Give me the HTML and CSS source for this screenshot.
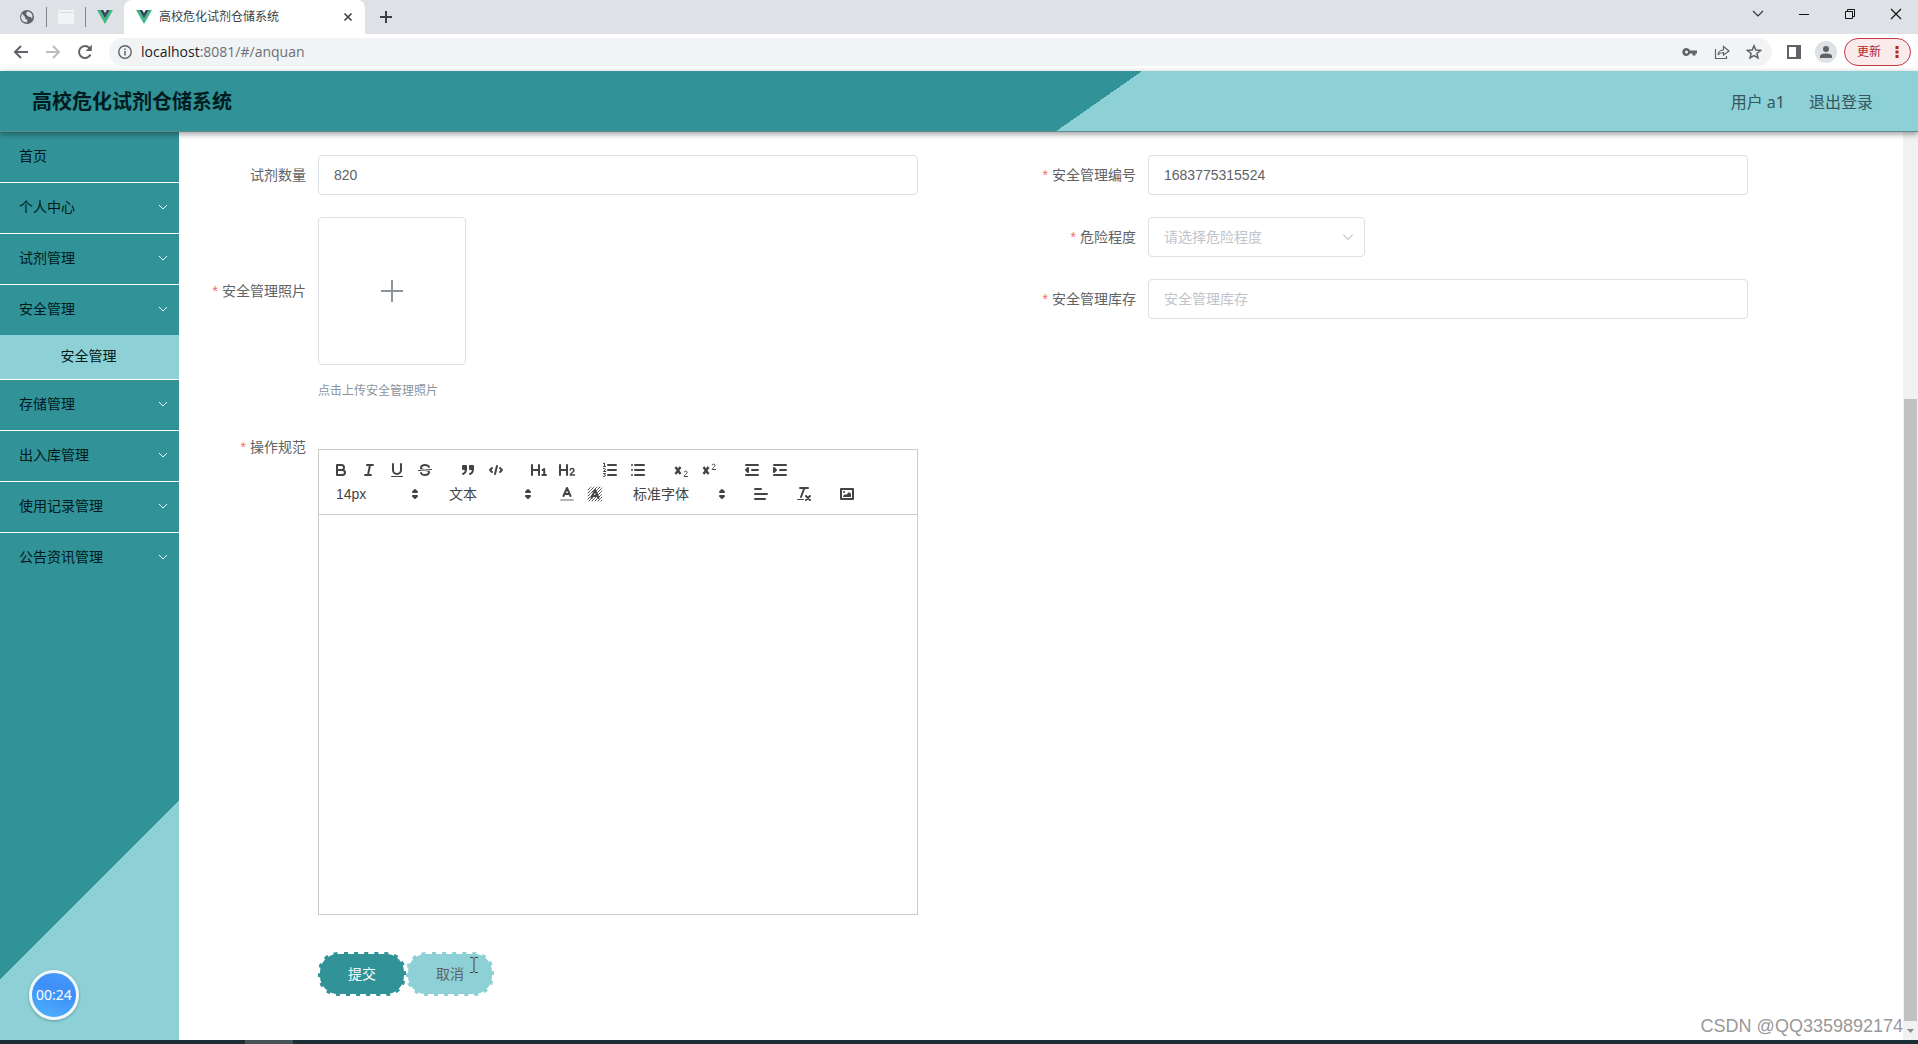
FILE: index.html
```html
<!DOCTYPE html>
<html lang="zh-CN">
<head>
<meta charset="utf-8">
<title>高校危化试剂仓储系统</title>
<link rel="stylesheet" href="styles.css">
</head>
<body>
<svg class="defs" aria-hidden="true">
  <symbol id="vue" viewBox="0 0 16 14"><path d="M0 0H3.2L8 8.3 12.8 0H16L8 14Z" fill="#41b883"/><path d="M3.2 0H6.2L8 3.1 9.8 0H12.8L8 8.3Z" fill="#35495e"/></symbol>
  <symbol id="chev" viewBox="0 0 12 12"><path d="M2 4L6 8 10 4" fill="none" stroke="currentColor"/></symbol>
  <symbol id="picker" viewBox="0 0 18 18"><path class="s f" d="M7 11L9 13 11 11ZM7 7L9 5 11 7Z"/></symbol>
</svg>

<div class="browser">
  <div class="tabs">
    <svg class="globe" width="16" height="16" viewBox="0 0 16 16"><circle cx="8" cy="8" r="7" fill="#5f6368"/><path d="M3 4.500L6 8 6.500 10 8.500 11 8 13.500C4 13.500 2 10.500 2 8ZM8 2.500L7 5 9 7.500 12 8 13 10 13.500 7C13 4 11 2.500 8 2.500Z" fill="#dee1e6"/></svg>
    <span class="tabline"></span>
    <svg class="blank" width="16" height="14" viewBox="0 0 16 14"><path d="M0 0H16V14H0Z" fill="#f3f4f6"/><path d="M1 2.500H15" stroke="#d7dade"/></svg>
    <span class="tabline"></span>
    <svg class="vue" width="16" height="14"><use href="#vue"/></svg>
    <div class="tab">
      <svg width="16" height="14"><use href="#vue"/></svg>
      <span class="tabtitle">高校危化试剂仓储系统</span>
      <button class="ib" aria-label="关闭标签页"><svg width="10" height="10" viewBox="0 0 10 10"><path d="M1.500 1.500L8.500 8.500M8.500 1.500L1.500 8.500" stroke="#3c4043" stroke-width="1.600"/></svg></button>
    </div>
    <button class="ib newtab" aria-label="新标签页"><svg width="14" height="14" viewBox="0 0 14 14"><path d="M7 1V13M1 7H13" stroke="#3c4043" stroke-width="2"/></svg></button>
    <div class="win">
      <button class="ib" aria-label="搜索标签页"><svg width="12" height="12" viewBox="0 0 12 12"><path d="M1 3L6 8 11 3" fill="none" stroke="#333" stroke-width="1.200"/></svg></button>
      <button class="ib" aria-label="最小化"><svg width="12" height="12" viewBox="0 0 12 12"><path d="M1 6.500H11" stroke="#111"/></svg></button>
      <button class="ib" aria-label="还原"><svg width="12" height="12" viewBox="0 0 12 12"><path d="M1.500 3.500H8.500V10.500H1.500ZM3.500 3V1.500H10.500V8.500H9" fill="none" stroke="#111"/></svg></button>
      <button class="ib" aria-label="关闭"><svg width="12" height="12" viewBox="0 0 12 12"><path d="M1 1L11 11M11 1L1 11" stroke="#111" stroke-width="1.200"/></svg></button>
    </div>
  </div>
  <div class="bar">
    <button class="ib" aria-label="后退"><svg width="16" height="16" viewBox="0 0 16 16"><path d="M15 8H2M8 2L2 8 8 14" fill="none" stroke="#5f6368" stroke-width="2"/></svg></button>
    <button class="ib" aria-label="前进"><svg width="16" height="16" viewBox="0 0 16 16"><path d="M1 8H14M8 2L14 8 8 14" fill="none" stroke="#babcbe" stroke-width="2"/></svg></button>
    <button class="ib" aria-label="重新加载"><svg width="16" height="16" viewBox="0 0 16 16"><path d="M13.500 10.500A6 6 0 1 1 12.500 4" fill="none" stroke="#5f6368" stroke-width="2"/><path d="M14.800 0.800V7H8.600Z" fill="#5f6368"/></svg></button>
    <div class="omni">
      <svg width="14" height="14" viewBox="0 0 14 14"><circle cx="7" cy="7" r="6.200" fill="none" stroke="#5f6368" stroke-width="1.400"/><path d="M7 6V10.500M7 3.400V5" stroke="#5f6368" stroke-width="1.500"/></svg>
      <p class="url"><b>localhost</b>:8081/#/anquan</p>
      <svg width="16" height="16" viewBox="0 0 16 16"><path d="M8 6.500H15V9.500H13.500V11.500H10.500V9.500H8A4 4 0 1 1 8 6.500ZM4.500 6.500A1.500 1.500 0 1 0 4.500 9.500 1.500 1.500 0 1 0 4.500 6.500Z" fill="#5f6368" fill-rule="evenodd"/></svg>
      <svg width="16" height="16" viewBox="0 0 16 16"><path d="M1.500 5V14.500H12.500V12M4 11C4.500 7.500 6.500 6 9.500 6V2.500L15 7 9.500 11V8.500C7 8.500 5.500 9 4 11Z" fill="none" stroke="#5f6368" stroke-width="1.200"/></svg>
      <svg width="16" height="16" viewBox="0 0 16 16"><path d="M8 1.800L9.800 6.100 14.500 6.500 10.900 9.500 12 14 8 11.600 4 14 5.100 9.500 1.500 6.500 6.200 6.100Z" fill="none" stroke="#5f6368" stroke-width="1.500"/></svg>
    </div>
    <svg class="panel" width="14" height="14" viewBox="0 0 14 14"><path d="M1 1H13V13H1Z" fill="none" stroke="#5f6368" stroke-width="2"/><path d="M9 0H14V14H9Z" fill="#5f6368"/></svg>
    <svg width="22" height="22" viewBox="0 0 22 22"><circle cx="11" cy="11" r="11" fill="#dee1e6"/><circle cx="11" cy="8" r="3" fill="#5f6368"/><path d="M5 17V15C5 11.500 17 11.500 17 15V17Z" fill="#5f6368"/></svg>
    <button class="update">更新<svg width="4" height="14" viewBox="0 0 4 14"><path d="M0.500 1H3.500V4H0.500ZM0.500 5.500H3.500V8.500H0.500ZM0.500 10H3.500V13H0.500Z" fill="#b3261e"/></svg></button>
  </div>
</div>

<header class="top">
  <h1>高校危化试剂仓储系统</h1>
  <nav><span>用户 a1</span><a href="#logout">退出登录</a></nav>
</header>

<div class="page">
  <nav class="side">
    <a href="#home">首页</a>
    <a href="#center">个人中心<svg width="12" height="12"><use href="#chev"/></svg></a>
    <a href="#reagent">试剂管理<svg width="12" height="12"><use href="#chev"/></svg></a>
    <a class="open" href="#safe">安全管理<svg width="12" height="12"><use href="#chev"/></svg></a>
    <a class="sub" href="#anquan">安全管理</a>
    <a href="#store">存储管理<svg width="12" height="12"><use href="#chev"/></svg></a>
    <a href="#inout">出入库管理<svg width="12" height="12"><use href="#chev"/></svg></a>
    <a href="#log">使用记录管理<svg width="12" height="12"><use href="#chev"/></svg></a>
    <a class="open" href="#news">公告资讯管理<svg width="12" height="12"><use href="#chev"/></svg></a>
    <div class="timer">00:24</div>
  </nav>

  <main>
    <form>
      <div class="cols">
        <div class="col">
          <div class="item"><label for="qty">试剂数量</label><input id="qty" class="wide" value="820"></div>
          <div class="item photo"><label class="req" for="photo">安全管理照片</label>
            <button type="button" id="photo" class="upload" aria-label="上传照片"><svg width="28" height="28" viewBox="0 0 28 28"><path d="M14 3V25M3 14H25" stroke="#8c939d" stroke-width="2"/></svg></button>
          </div>
          <p class="hint">点击上传安全管理照片</p>
        </div>
        <div class="col">
          <div class="item"><label class="req" for="no">安全管理编号</label><input id="no" class="wide" value="1683775315524"></div>
          <div class="item"><label class="req" for="level">危险程度</label>
            <span class="pick"><select id="level"><option>请选择危险程度</option></select><svg width="14" height="14"><use href="#chev"/></svg></span>
          </div>
          <div class="item"><label class="req" for="stock">安全管理库存</label><input id="stock" class="wide" placeholder="安全管理库存"></div>
        </div>
      </div>

      <div class="item rich">
        <label class="req" for="rule">操作规范</label>
        <div class="editor">
          <div class="tools">
            <div class="grp">
              <button type="button" aria-label="粗体"><svg viewBox="0 0 18 18"><path class="s" d="M5 4H9.500A2.500 2.500 0 0 1 9.500 9H5ZM5 9H10.500A2.500 2.500 0 0 1 10.500 14H5Z"/></svg></button>
              <button type="button" aria-label="斜体"><svg viewBox="0 0 18 18"><path class="s" d="M7 4H13M5 14H11M8 14L10 4"/></svg></button>
              <button type="button" aria-label="下划线"><svg viewBox="0 0 18 18"><path class="s" d="M5 3V9A4 4 0 0 0 13 9V3"/><rect class="f" x="3" y="15" width="12" height="1" rx=".5"/></svg></button>
              <button type="button" aria-label="删除线"><svg viewBox="0 0 18 18"><path class="s t" d="M15.500 8.500L2.500 9.500"/><path class="f" d="M9.007,8C6.542,7.791,6,7.519,6,6.500,6,5.792,7.283,5,9,5c1.571,0,2.765.679,2.969,1.309a1,1,0,0,0,1.900-.617C13.356,4.106,11.354,3,9,3,6.200,3,4,4.538,4,6.500a3.200,3.200,0,0,0,.5,1.843ZM8.984,10C11.457,10.208,12,10.479,12,11.500c0,.708-1.283,1.500-3,1.500-1.571,0-2.765-.679-2.969-1.309a1,1,0,1,0-1.900.617C4.644,13.894,6.646,15,9,15c2.800,0,5-1.538,5-3.500a3.200,3.200,0,0,0-.5-1.843Z"/></svg></button>
            </div>
            <div class="grp">
              <button type="button" aria-label="引用"><svg viewBox="0 0 18 18"><path class="s f" d="M4 5H7V8H4ZM11 5H14V8H11Z"/><path class="s" d="M7 8C7 12 4 13 4 13M14 8C14 12 11 13 11 13"/></svg></button>
              <button type="button" aria-label="代码块"><svg viewBox="0 0 18 18"><path class="s" d="M5 7L3 9 5 11M13 7L15 9 13 11M10 5L8 13"/></svg></button>
            </div>
            <div class="grp">
              <button type="button" aria-label="一级标题"><svg viewBox="0 0 18 18"><path class="s" d="M2 4V14M9 4V14M2 9H9M12.500 9L14.200 8V14M12.400 14H16"/></svg></button>
              <button type="button" aria-label="二级标题"><svg viewBox="0 0 18 18"><path class="s" d="M2 4V14M9 4V14M2 9H9"/><path class="s m" d="M12.300 9C12.300 7 16 7 16 9.300 16 11 12.300 12.500 12.300 14H16.500"/></svg></button>
            </div>
            <div class="grp">
              <button type="button" aria-label="有序列表"><svg viewBox="0 0 18 18"><path class="s" d="M7 4H15M7 9H15M7 14H15"/><path class="s t" d="M2.500 2.500L3.500 2V5.500M2.500 5.500H4.500M2.500 7.500C4 7 5 8 4 9L2.500 10.500H4.800M2.500 12.500H4.500L3.500 14C5.500 14 4.500 16 2.500 15.500"/></svg></button>
              <button type="button" aria-label="无序列表"><svg viewBox="0 0 18 18"><path class="s" d="M6 4H15M6 9H15M6 14H15M3 4H3M3 9H3M3 14H3"/></svg></button>
            </div>
            <div class="grp">
              <button type="button" aria-label="下标"><svg viewBox="0 0 18 18"><path class="s x" d="M3.500 6L8.500 13M8.500 6L3.500 13"/><path class="s t" d="M12.200 11C12.500 9.600 15.300 9.800 15 11.500 14.800 12.800 12.500 14 12.200 15.500H15.500"/></svg></button>
              <button type="button" aria-label="上标"><svg viewBox="0 0 18 18"><path class="s x" d="M3.500 6L8.500 13M8.500 6L3.500 13"/><path class="s t" d="M12.200 4C12.500 2.600 15.300 2.800 15 4.500 14.800 5.800 12.500 7 12.200 8.500H15.500"/></svg></button>
            </div>
            <div class="grp">
              <button type="button" aria-label="减少缩进"><svg viewBox="0 0 18 18"><path class="s" d="M3 14H15M3 4H15M9 9H15"/><path class="s f" d="M5 7V11L3 9Z"/></svg></button>
              <button type="button" aria-label="增加缩进"><svg viewBox="0 0 18 18"><path class="s" d="M3 14H15M3 4H15M9 9H15"/><path class="s f" d="M3 7V11L5 9Z"/></svg></button>
            </div>
            <span class="brk"></span>
            <div class="grp"><button type="button" class="pk">14px<svg viewBox="0 0 18 18"><use href="#picker"/></svg></button></div>
            <div class="grp"><button type="button" class="pk">文本<svg viewBox="0 0 18 18"><use href="#picker"/></svg></button></div>
            <div class="grp">
              <button type="button" aria-label="文字颜色"><svg viewBox="0 0 18 18"><path class="s pale" d="M3 15H15"/><path class="s" d="M5.500 11L9 3 12.500 11M11.600 9H6.400"/></svg></button>
              <button type="button" aria-label="背景颜色"><svg viewBox="0 0 18 18"><path class="s h" d="M2 5L5 2M2 8L8 2M2 11L11 2M2 14L14 2M3 16L16 3M6 16L16 6M9 16L16 9M12 16L16 12M15 16L16 15"/><path class="s" d="M5.500 13L9 5 12.500 13M11.600 11H6.400"/></svg></button>
            </div>
            <div class="grp"><button type="button" class="pk font">标准字体<svg viewBox="0 0 18 18"><use href="#picker"/></svg></button></div>
            <div class="grp"><button type="button" aria-label="对齐"><svg viewBox="0 0 18 18"><path class="s" d="M3 9H15M3 14H13M3 4H9"/></svg></button></div>
            <div class="grp"><button type="button" aria-label="清除格式"><svg viewBox="0 0 18 18"><path class="s" d="M5 3H13M6 12L9.350 3M11 11L15 15M15 11L11 15"/><rect class="f" x="2" y="14" width="7" height="1" rx=".5"/></svg></button></div>
            <div class="grp"><button type="button" aria-label="图片"><svg viewBox="0 0 18 18"><path class="s" d="M3 4H15V14H3Z"/><circle class="f" cx="6" cy="7" r="1"/><path class="f" d="M5 12V11L7 9 8 10 11 7 13 9V12Z"/></svg></button></div>
          </div>
          <textarea id="rule"></textarea>
        </div>
      </div>

      <div class="actions">
        <button type="submit" class="btn">提交</button>
        <button type="button" class="btn cancel">取消</button>
        <svg class="caret" width="8" height="16" viewBox="0 0 8 16"><path d="M0 .5H3L4 1.500 5 .5H8M4 1.500V14.500M0 15.500H3L4 14.500 5 15.500H8" fill="none" stroke="#444"/></svg>
      </div>
    </form>
    <p class="mark">CSDN @QQ3359892174</p>
  </main>

  <div class="scroll"><span class="track"></span><span class="thumb"></span><svg width="15" height="19" viewBox="0 0 15 19"><path d="M4 8H11L7.500 12Z" fill="#8a8a8a"/></svg></div>
</div>
<footer class="task"><span></span></footer>
</body>
</html>
```
FILE: styles.css
```css
* { box-sizing: border-box; }
body {
  margin: 0;
  min-height: 100vh;
  display: flex;
  flex-direction: column;
  background: #fff;
  color: #606266;
  font: 14px/20px "Liberation Sans", "Noto Sans CJK SC", sans-serif;
}
h1, p { margin: 0; }
a { color: inherit; text-decoration: none; }
button, input, select, textarea { font: inherit; color: inherit; margin: 0; }
svg { display: block; flex: none; }
.defs { position: absolute; width: 0; height: 0; }
.ib { display: flex; padding: 0; border: 0; background: none; }

/* browser frame */
.browser { font-family: "Open Sans", "Noto Sans CJK SC", sans-serif; }
.tabs { display: flex; align-items: center; height: 34px; background: #dee1e6; padding-left: 19px; }
.tabline { width: 1px; height: 20px; background: #80868b; }
.globe { margin-right: 11px; }
.blank { margin: 0 11px; }
.vue { margin: 0 11px; }
.tab {
  display: flex; align-items: center; align-self: stretch; gap: 7px;
  width: 241px; padding: 0 12px;
  background: #fff; border-radius: 8px 8px 0 0;
}
.tabtitle { flex: 1; font-size: 12px; color: #3c4043; }
.newtab { margin-left: 14px; }
.win { display: flex; gap: 34px; margin-left: auto; padding: 0 16px 6px 0; }
.bar { display: flex; align-items: center; height: 37px; padding: 0 7px 1px 13px; }
.bar > .ib { margin-right: 16px; }
.omni {
  flex: 1; display: flex; align-items: center; gap: 16px;
  height: 28px; margin: 0 15px 0 0; padding: 0 10px 0 9px; border-radius: 14px; background: #f1f3f4;
}
.url { flex: 1; margin-left: -7px; font-size: 14px; color: #6b6f74; }
.url b { font-weight: 400; color: #202124; }
.panel { margin-right: 14px; }
.update {
  display: flex; align-items: center; gap: 14px; height: 28px; margin-left: 7px; padding: 0 11px 0 12px;
  border: 1px solid #c5383f; border-radius: 14px; background: #fbeaec; color: #b3262e; font-size: 12px;
}

/* application header */
.top {
  position: relative; z-index: 1;
  display: flex; align-items: center; justify-content: space-between;
  height: 61px; padding: 2px 45px 0 32px; border-bottom: 1px solid #5f8a8d;
  background: linear-gradient(145deg, #319297 57%, #8dd1d6 57%);
  box-shadow: 0 2px 6px rgba(0, 0, 0, .4);
}
.top h1 { font-size: 20px; line-height: 28px; color: #001c1f; }
.top nav { display: flex; gap: 24px; font: 16px/24px "Noto Sans", "Noto Sans CJK SC", sans-serif; color: #34565c; }

.page { flex: 1; display: flex; }
.side {
  display: flex; flex-direction: column; width: 179px; color: #00191b;
  background: linear-gradient(-45deg, #8dd1d6 169px, #319297 169px);
}
.side a {
  display: flex; align-items: center; justify-content: space-between;
  height: 51px; padding: 0 10px 2px 19px; border-bottom: 1px solid #fff;
}
.side a svg { color: #e6ffff; }
.side .open { height: 50px; border: 0; }
.side .sub { height: 45px; justify-content: center; padding: 0 2px 2px 0; background: #8dd1d6; }
.timer {
  display: flex; align-items: center; justify-content: center;
  width: 50px; height: 50px; margin: auto 0 20px 29px; border: 3px solid #f2f7fc; border-radius: 50%;
  background: linear-gradient(20deg, #4fb4fb, #3d8ff8 60%, #4c9bf8);
  box-shadow: 0 1px 3px rgba(0, 0, 0, .3); color: #fff; font: 14px/20px "Noto Sans", sans-serif;
}

main { position: relative; flex: 1; padding: 23px 45px 43px 19px; }
.cols { display: grid; grid-template-columns: 1fr 1fr; }
.item { display: flex; align-items: center; margin-bottom: 22px; }
.item label { width: 120px; padding-right: 12px; text-align: right; }
.req::before { content: "*"; margin-right: 4px; color: #f56c6c; }
input, select { height: 40px; padding: 0 15px; border: 1px solid #dcdfe6; border-radius: 4px; background: #fff; }
.wide { flex: 0 1 600px; min-width: 0; }
input::placeholder { color: #c0c4cc; }
.pick { position: relative; width: 217px; }
.pick select { display: block; width: 100%; color: #c0c4cc; appearance: none; }
.pick svg { position: absolute; right: 10px; top: 13px; color: #c0c4cc; }
.upload {
  display: flex; align-items: center; justify-content: center;
  width: 148px; height: 148px; padding: 0; border: 1px solid #dcdfe6; border-radius: 4px; background: #fff;
}
.photo { margin-bottom: 16px; }
.hint { padding-left: 120px; font-size: 12px; color: #8a93a0; }

/* rich text editor */
.rich { align-items: flex-start; margin: 36px 0 37px; }
.editor { flex: 0 1 600px; margin-top: 12px; border: 1px solid #ccc; }
.tools { display: flex; flex-wrap: wrap; gap: 0 15px; padding: 8px; border-bottom: 1px solid #ccc; color: #444; }
.grp { display: flex; }
.brk { flex-basis: 100%; }
.tools button { display: flex; align-items: center; width: 28px; height: 24px; padding: 3px 5px; border: 0; background: none; }
.tools svg { width: 18px; height: 18px; }
.tools .pk { justify-content: space-between; width: 98px; padding: 0 1px 0 9px; }
.tools .font { width: 108px; }
.s { fill: none; stroke: #444; stroke-width: 2; stroke-linecap: round; stroke-linejoin: round; }
.f { fill: #444; }
.m { stroke-width: 1.5px; }
.t { stroke-width: 1px; }
.x { stroke-linecap: butt; stroke-width: 2.4px; }
.h { stroke-width: 1px; stroke-dasharray: 1 1; }
.pale { opacity: .4; }
textarea { display: block; width: 100%; height: 399px; padding: 12px 15px; border: 0; resize: none; background: none; }

.actions { position: relative; display: flex; padding-left: 120px; }
.btn { width: 88px; height: 44px; padding: 0; border: 2px dashed #fff; border-radius: 20px; background: #319297; color: #fff; }
.cancel { background: #8dd1d6; color: #606266; }
.caret { position: absolute; left: 272px; top: 5px; }
.mark { position: absolute; right: 0; bottom: 2px; font: 18px/24px "Liberation Sans", sans-serif; color: #999; }

.scroll { display: flex; flex-direction: column; align-items: center; width: 15px; background: #f1f1f1; }
.track { flex: 3; }
.thumb { flex: 7; width: 13px; background: #c1c1c1; }
.task { height: 4px; padding-left: 245px; background: #1c2f36; }
.task span { display: block; width: 48px; height: 4px; background: #485358; }
```
